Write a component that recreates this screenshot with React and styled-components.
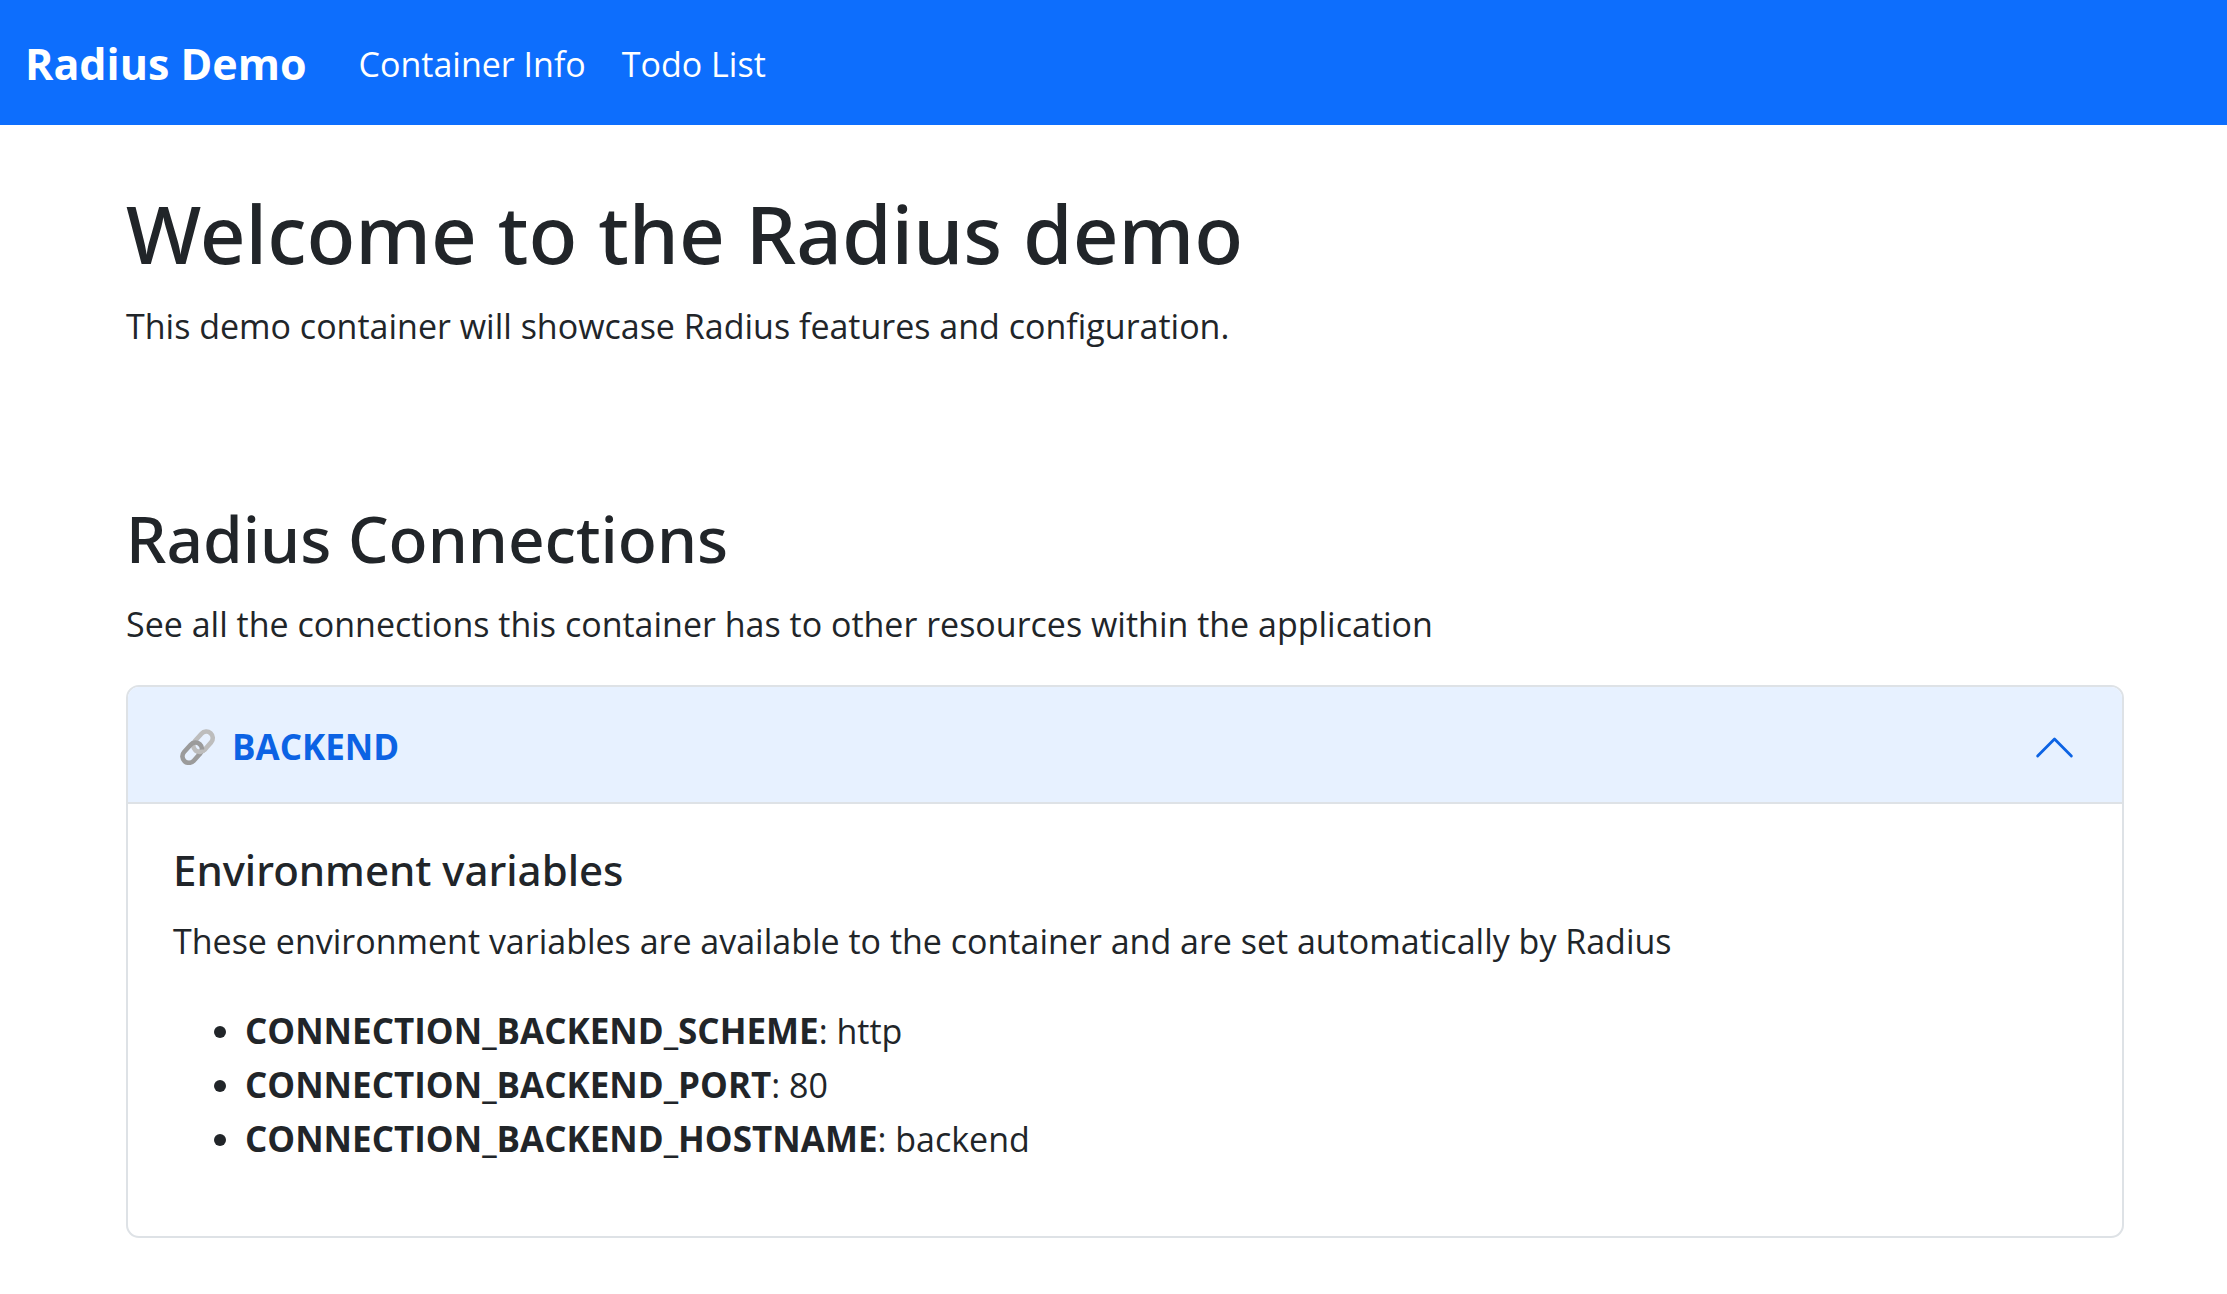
import React, { useState } from "react";
import styled, { createGlobalStyle } from "styled-components";

const GlobalStyle = createGlobalStyle`
  *, *::before, *::after { box-sizing: border-box; }
  body {
    margin: 0;
    background: #fff;
    color: #212529;
    font-family: "Open Sans", "Noto Sans", sans-serif;
    font-size: 34px;
    line-height: 54px;
  }
`;

const Navbar = styled.nav`
  display: flex;
  align-items: center;
  padding: 37px 25px 34px;
  background: #0d6efd;
`;

const Brand = styled.a`
  margin-right: 52px;
  color: #fff;
  font-size: 43px;
  font-weight: 700;
  text-decoration: none;
`;

const NavLinks = styled.div`
  display: flex;
  gap: 36px;
`;

const NavLink = styled.a`
  color: #fff;
  text-decoration: none;
`;

const Main = styled.main`
  display: flex;
  flex-direction: column;
  gap: 110px;
  padding: 58px 103px 36px 126px;
`;

const Title = styled.h1`
  margin: 0 0 16px;
  font-family: "Noto Sans", sans-serif;
  font-size: 80px;
  font-weight: 500;
  line-height: 100px;
`;

const SectionTitle = styled.h2`
  margin: 0 0 16px;
  font-family: "Noto Sans", sans-serif;
  font-size: 64px;
  font-weight: 500;
  line-height: 84px;
`;

const PanelTitle = styled.h5`
  margin: 0 0 16px;
  font-family: "Noto Sans", sans-serif;
  font-size: 42px;
  font-weight: 500;
  line-height: 56px;
`;

const Text = styled.p`
  margin: 0 0 34px;
`;

const Accordion = styled.div`
  overflow: hidden;
  border: 2px solid #dee2e6;
  border-radius: 13px;
`;

const AccordionHeader = styled.h2`
  margin: 0;
  font-size: 35px;
  line-height: 54px;
`;

const AccordionButton = styled.button`
  display: flex;
  align-items: center;
  gap: 16px;
  width: 100%;
  padding: 33px 45px 28px 52px;
  border: 0;
  background: #e7f1ff;
  color: #0c63e4;
  font: inherit;
  font-weight: 700;
  text-align: left;
  cursor: pointer;
`;

const Chevron = styled.svg`
  width: 45px;
  height: 45px;
  margin-left: auto;
  transform: ${(p) => (p.$open ? "rotate(180deg)" : "none")};
`;

const AccordionBody = styled.div`
  padding: 38px 45px 36px;
  border-top: 2px solid #dee2e6;
`;

const VariableList = styled.ul`
  margin: 36px 0 34px;
  padding-left: 72px;
`;

const VariableName = styled.strong`
  font-size: 35px;
  font-weight: 700;
`;

function LinkIcon() {
  return (
    <svg width="36" height="36" viewBox="0 0 36 36" fill="none" strokeWidth="4.6" aria-hidden="true">
      <defs>
        <clipPath id="link-front">
          <rect x="14" y="20.5" width="18" height="8" />
        </clipPath>
      </defs>
      <rect x="11.6" y="6.2" width="22.8" height="13" rx="6.5" stroke="#bdbdbd" transform="rotate(-48 23 12.7)" />
      <rect x="0.8" y="17.2" width="22.8" height="13" rx="6.5" stroke="#9b9b9b" transform="rotate(-48 12.2 23.7)" />
      <g clipPath="url(#link-front)">
        <rect x="11.6" y="6.2" width="22.8" height="13" rx="6.5" stroke="#bdbdbd" transform="rotate(-48 23 12.7)" />
      </g>
    </svg>
  );
}

const variables = [
  { name: "CONNECTION_BACKEND_SCHEME", value: "http" },
  { name: "CONNECTION_BACKEND_PORT", value: "80" },
  { name: "CONNECTION_BACKEND_HOSTNAME", value: "backend" },
];

export default function App() {
  const [open, setOpen] = useState(true);

  return (
    <>
      <GlobalStyle />
      <Navbar>
        <Brand href="#">Radius Demo</Brand>
        <NavLinks>
          <NavLink href="#info">Container Info</NavLink>
          <NavLink href="#todo">Todo List</NavLink>
        </NavLinks>
      </Navbar>
      <Main>
        <section>
          <Title>Welcome to the Radius demo</Title>
          <Text>This demo container will showcase Radius features and configuration.</Text>
        </section>
        <section>
          <SectionTitle>Radius Connections</SectionTitle>
          <Text>See all the connections this container has to other resources within the application</Text>
          <Accordion>
            <AccordionHeader>
              <AccordionButton
                type="button"
                aria-expanded={open}
                aria-controls="backend-panel"
                onClick={() => setOpen(!open)}
              >
                <LinkIcon />
                BACKEND
                <Chevron viewBox="0 0 16 16" fill="currentColor" aria-hidden="true" $open={open}>
                  <path
                    fillRule="evenodd"
                    d="M1.646 4.646a.5.5 0 0 1 .708 0L8 10.293l5.646-5.647a.5.5 0 0 1 .708.708l-6 6a.5.5 0 0 1-.708 0l-6-6a.5.5 0 0 1 0-.708z"
                  />
                </Chevron>
              </AccordionButton>
            </AccordionHeader>
            {open && (
              <AccordionBody id="backend-panel">
                <PanelTitle>Environment variables</PanelTitle>
                <Text>
                  These environment variables are available to the container and are set automatically by Radius
                </Text>
                <VariableList>
                  {variables.map((v) => (
                    <li key={v.name}>
                      <VariableName>{v.name}</VariableName>: {v.value}
                    </li>
                  ))}
                </VariableList>
              </AccordionBody>
            )}
          </Accordion>
        </section>
      </Main>
    </>
  );
}
